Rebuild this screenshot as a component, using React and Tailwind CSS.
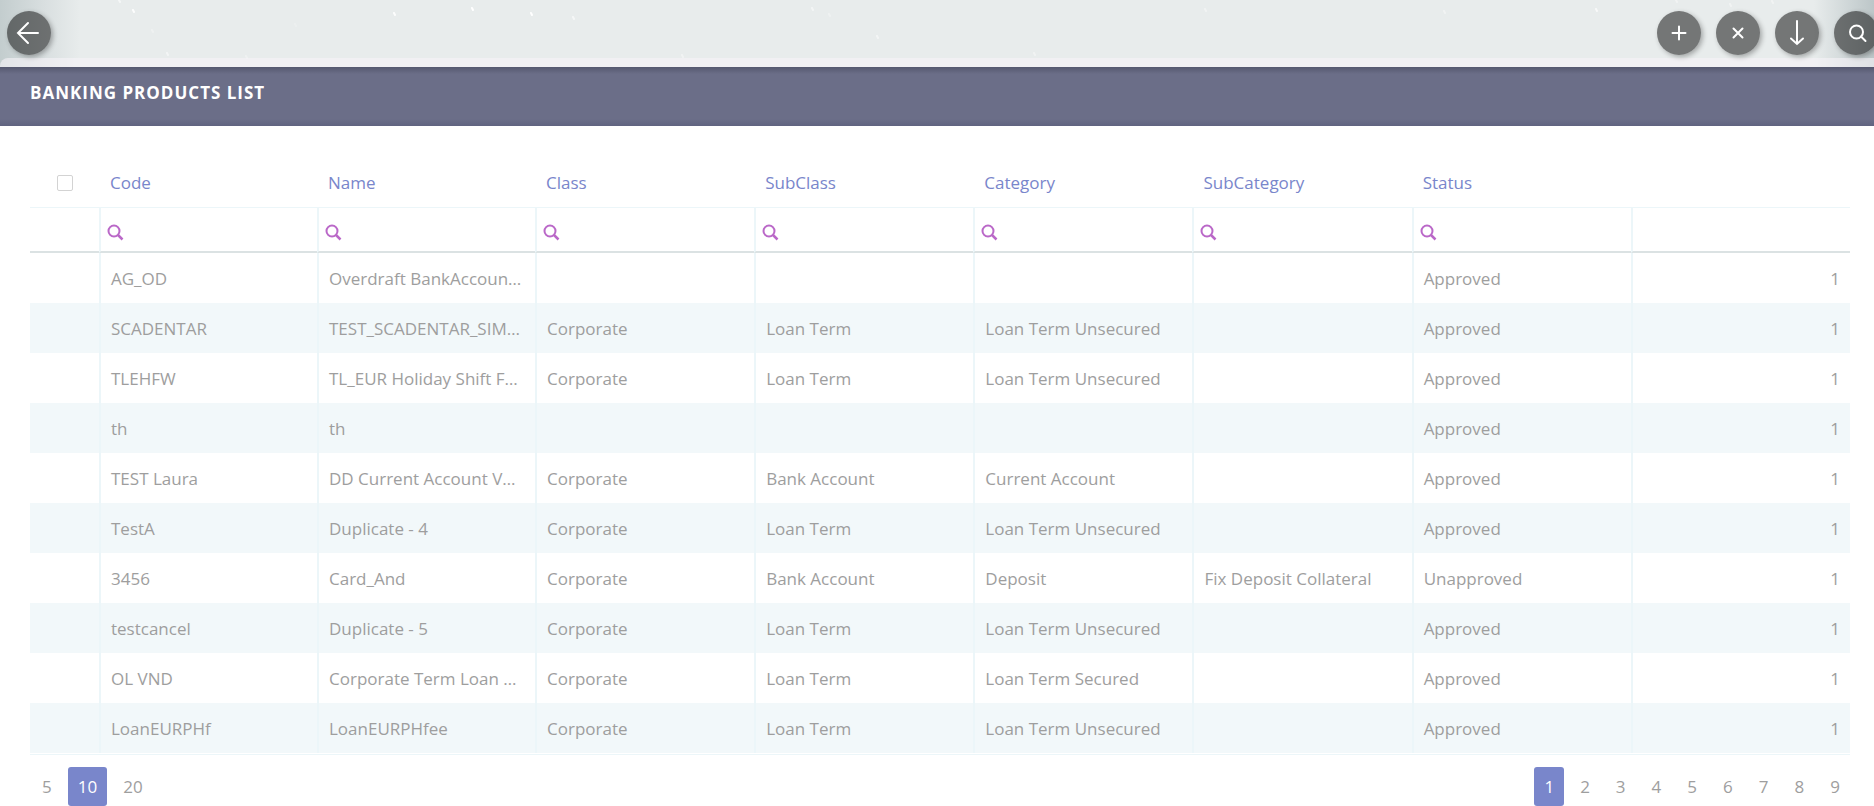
import { useState } from 'react'

const columns = ['Code', 'Name', 'Class', 'SubClass', 'Category', 'SubCategory', 'Status']

const products = [
  ['AG_OD', 'Overdraft BankAccoun…', '', '', '', '', 'Approved'],
  ['SCADENTAR', 'TEST_SCADENTAR_SIM…', 'Corporate', 'Loan Term', 'Loan Term Unsecured', '', 'Approved'],
  ['TLEHFW', 'TL_EUR Holiday Shift F…', 'Corporate', 'Loan Term', 'Loan Term Unsecured', '', 'Approved'],
  ['th', 'th', '', '', '', '', 'Approved'],
  ['TEST Laura', 'DD Current Account V…', 'Corporate', 'Bank Account', 'Current Account', '', 'Approved'],
  ['TestA', 'Duplicate - 4', 'Corporate', 'Loan Term', 'Loan Term Unsecured', '', 'Approved'],
  ['3456', 'Card_And', 'Corporate', 'Bank Account', 'Deposit', 'Fix Deposit Collateral', 'Unapproved'],
  ['testcancel', 'Duplicate - 5', 'Corporate', 'Loan Term', 'Loan Term Unsecured', '', 'Approved'],
  ['OL VND', 'Corporate Term Loan …', 'Corporate', 'Loan Term', 'Loan Term Secured', '', 'Approved'],
  ['LoanEURPHf', 'LoanEURPHfee', 'Corporate', 'Loan Term', 'Loan Term Unsecured', '', 'Approved'],
]

// light specks of the banner background: x, y, opacity
const specks = [
  [119, 0, 0.6], [133, 10, 0.9], [167, 53, 0.5], [246, 56, 0.3], [152, 30, 0.3], [295, 24, 0.2], [394, 13, 0.9],
  [472, 8, 1], [531, 13, 1], [573, 17, 0.6], [682, 55, 0.4], [812, 8, 0.5], [829, 14, 0.3], [877, 36, 0.5],
  [1034, 53, 0.4], [1205, 9, 0.4], [1444, 11, 0.4], [1596, 9, 0.7], [1676, 0, 0.4], [1730, 4, 0.4], [1772, 1, 0.4],
]

function RoundButton({ label, children }) {
  return (
    <button
      type="button"
      aria-label={label}
      className="flex size-11 shrink-0 items-center justify-center rounded-full bg-black/50 text-white shadow-[2px_2px_5px_rgba(0,0,0,0.3)]"
    >
      <svg viewBox="0 0 44 44" className="size-11" fill="none" stroke="currentColor" strokeWidth="2" strokeLinecap="round">
        {children}
      </svg>
    </button>
  )
}

function Pager({ label, items, value, onChange }) {
  return (
    <nav aria-label={label} className="flex gap-1.5">
      {items.map((item) => (
        <button
          key={item}
          type="button"
          onClick={() => onChange(item)}
          className={`h-[39px] rounded-[3px] px-2.5 ${item === value ? 'bg-[#7986cb] text-white' : 'text-[#9e9e9e]'}`}
        >
          {item}
        </button>
      ))}
    </nav>
  )
}

export default function App() {
  const [pageSize, setPageSize] = useState(10)
  const [page, setPage] = useState(1)

  return (
    <div className="h-screen overflow-hidden bg-white font-['Open_Sans',sans-serif] text-[17px] leading-6 text-[#9e9e9e]">
      {/* Banner with the round action buttons */}
      <header className="relative overflow-hidden bg-[linear-gradient(90deg,#c3cdce_0px,#d9dfe0_45px,#e8ecec_80px,#e8ecec_calc(100%-60px),#bcc6c8_100%)]">
        <svg aria-hidden="true" className="absolute inset-0 h-full w-full" stroke="white" strokeWidth="2" strokeLinecap="round">
          {specks.map(([x, y, o]) => (
            <line key={x} x1={x} y1={y} x2={x + 1} y2={y + 2} opacity={o} />
          ))}
        </svg>
        <div className="relative z-10 flex h-[58px] items-center pl-[7px] pt-2">
          <RoundButton label="Back">
            <path d="M11 22H31M21 12L11 22L21 32" />
          </RoundButton>
          <div className="-mr-1 ml-auto flex gap-[15px]">
            <RoundButton label="Add">
              <path d="M22 15.500V28.500M15.500 22H28.500" />
            </RoundButton>
            <RoundButton label="Delete">
              <path d="M17.500 17.500L26.500 26.500M26.500 17.500L17.500 26.500" />
            </RoundButton>
            <RoundButton label="Export">
              <path d="M22 10V33M16 27.500L22 33L28 27.500" />
            </RoundButton>
            <RoundButton label="Search">
              <circle cx="22.500" cy="21" r="6.500" />
              <path d="M27 25.500L31.500 30" />
            </RoundButton>
          </div>
        </div>
        <div className="relative h-[9px] rounded-tl-lg bg-[#f7f3f8]/60" />
      </header>

      <div className="h-[59px] bg-[linear-gradient(#55586f_0px,#6b6e88_7px,#6b6e88_calc(100%-7px),#606380_100%)] px-[30px] pt-3.5">
        <h1 className="text-[17px] font-bold tracking-[1px] text-white">BANKING PRODUCTS LIST</h1>
      </div>

      <main className="pl-[30px] pr-6 pt-8">
        <table className="w-full table-fixed border-separate border-spacing-0 border-b border-[#ecf6f9] pb-px text-left">
          <colgroup>
            <col className="w-[69px]" />
            <col className="w-[218px]" />
            <col className="w-[218px]" />
            <col span={6} />
          </colgroup>
          <thead>
            <tr className="h-[50px] text-[#7986cb]">
              <th className="border-b border-[#ecf6f9] font-normal">
                <input
                  type="checkbox"
                  aria-label="Select all"
                  className="ml-[27px] block size-4 appearance-none rounded-[2px] border border-[#d3d3d3] bg-white"
                />
              </th>
              {columns.map((c) => (
                <th key={c} className="border-b border-[#ecf6f9] pl-[11px] font-normal">
                  {c}
                </th>
              ))}
              <th className="border-b border-[#ecf6f9]" aria-label="Version" />
            </tr>
            <tr className="h-[45px]">
              <td className="border-b-2 border-[#dbe2e3]" />
              {columns.map((c) => (
                <td key={c} className="border-b-2 border-l-2 border-b-[#dbe2e3] border-l-[#ecf6f9] pl-[5px] pt-1">
                  <label className="flex items-center gap-2">
                    <svg viewBox="0 0 18 18" className="size-[18px] shrink-0 text-[#ba68c8]" fill="none" stroke="currentColor" strokeWidth="2">
                      <circle cx="8" cy="8" r="5.500" />
                      <path d="M12 12L16.500 16.500" strokeWidth="2.500" />
                    </svg>
                    <input type="text" aria-label={`Filter ${c}`} className="w-full min-w-0 outline-none" />
                  </label>
                </td>
              ))}
              <td className="border-b-2 border-l-2 border-b-[#dbe2e3] border-l-[#ecf6f9]" />
            </tr>
          </thead>
          <tbody>
            {products.map((row) => (
              <tr key={row[0]} className="h-[50px] even:bg-[#f2f8fa]">
                <td />
                {row.map((value, i) => (
                  <td key={columns[i]} className="whitespace-nowrap border-l-2 border-[#ecf6f9] px-2.5 pt-0.5">
                    {value}
                  </td>
                ))}
                <td className="border-l-2 border-[#ecf6f9] px-2.5 pt-0.5 text-right">1</td>
              </tr>
            ))}
          </tbody>
        </table>

        <div className="flex justify-between pl-0.5 pt-3">
          <Pager label="Page size" items={[5, 10, 20]} value={pageSize} onChange={setPageSize} />
          <Pager label="Pages" items={[1, 2, 3, 4, 5, 6, 7, 8, 9]} value={page} onChange={setPage} />
        </div>
      </main>
    </div>
  )
}
